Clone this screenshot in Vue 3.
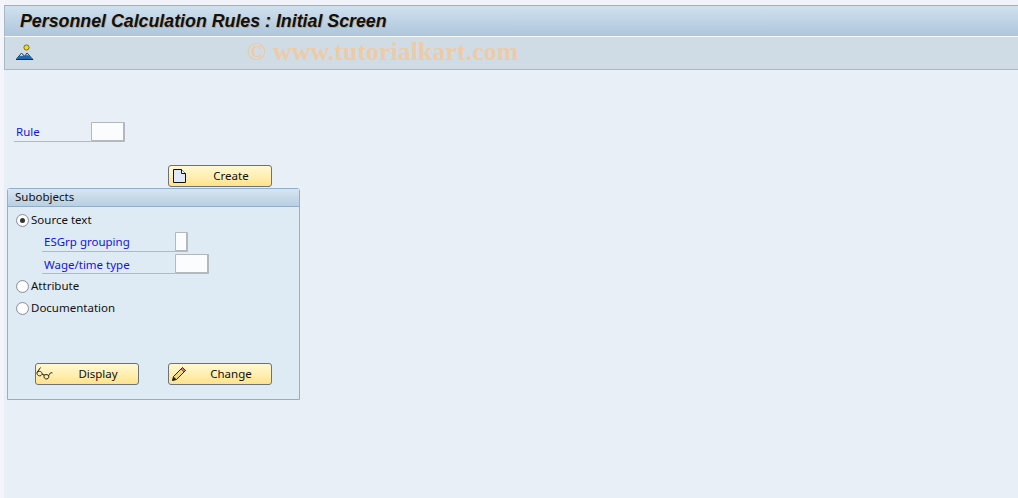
<script setup>
const radios = {
  attribute: 'Attribute',
  documentation: 'Documentation',
}
</script>

<template>
  <div class="page">
    <div class="edge"></div>
    <div class="main">
      <div class="topline"></div>
      <div class="titlebar"><h1>Personnel Calculation Rules : Initial Screen</h1></div>
      <div class="toolbar">
        <svg class="tool-icon" width="18" height="18" viewBox="0 0 18 18">
          <circle cx="10.5" cy="3.5" r="2.6" fill="#f8dc10" stroke="#6b6320" stroke-width="0.9" />
          <path d="M0.5 15.5 5.5 9.5 8.5 12.5 11 9.5 16.5 15.5Z" fill="#1b69b4" />
          <path d="M5.5 9.5 3.6 11.8 5.4 11.4 7.2 12.2ZM11 9.5 9.4 11.4 11 11 12.8 11.6Z" fill="#fff" />
          <path d="M0 15.5 5.5 9 8.5 12.3 11 9 17 15.5" fill="none" stroke="#10304f" stroke-width="0.9" />
          <path d="M0 15.5H17" stroke="#10304f" stroke-width="1" />
        </svg>
      </div>
      <div class="watermark">© www.tutorialkart.com</div>
      <div class="content">
        <div class="rule-row">
          <label class="field-label rule-label">Rule</label>
          <span class="input w34"></span>
        </div>
        <div class="create-row">
          <button class="btn">
            <svg class="btn-icon" width="16" height="16" viewBox="0 0 16 16">
              <path d="M2.5 1.5H10.5L14.5 5.5V14.5H2.5Z" fill="#dfeaf6" stroke="#111" />
              <path d="M10.5 1.5V5.5H14.5" fill="#fff" stroke="#111" />
            </svg>
            <span>Create</span>
          </button>
        </div>
        <section class="group">
          <div class="group-head">Subobjects</div>
          <div class="group-body">
            <div class="radio-row first">
              <span class="radio on"></span><span class="radio-text">Source text</span>
            </div>
            <div class="sub-row tall">
              <label class="field-label sub-label first-label">ESGrp grouping</label>
              <span class="input w13"></span>
            </div>
            <div class="sub-row">
              <label class="field-label sub-label">Wage/time type</label>
              <span class="input w34"></span>
            </div>
            <div class="radio-row attr">
              <span class="radio"></span><span class="radio-text">{{ radios.attribute }}</span>
            </div>
            <div class="radio-row doc">
              <span class="radio"></span><span class="radio-text">{{ radios.documentation }}</span>
            </div>
            <div class="actions">
              <button class="btn">
                <svg class="btn-icon glasses" width="18" height="16" viewBox="0 0 18 16">
                  <path d="M4.5 1.5 1 6.5C0.5 9 3 10.5 5 9.5 6.5 8.5 6.5 6.5 4.5 5.5 3.5 5 2 5.5 1 6.5M6 8 8 9M8 9C7.5 11.5 9 13.5 11 13 13 12.5 13.5 10 12 9 11 8.5 9 8.5 8 9M13 9.5C13.5 7.5 14.5 6 16.5 7" fill="none" stroke="#222" stroke-width="1" />
                </svg>
                <span>Display</span>
              </button>
              <button class="btn">
                <svg class="btn-icon" width="16" height="16" viewBox="0 0 16 16">
                  <path d="M1.5 14.5 2.5 10.5 11.5 1.5 14.5 4.5 5.5 13.5Z" fill="#f4d77c" stroke="#222" />
                  <path d="M11.5 1.5 14.5 4.5 13 6 10 3Z" fill="#d0746a" stroke="#222" stroke-width="0.6" />
                  <path d="M1.5 14.5 2.5 10.5 5.5 13.5Z" fill="#222" />
                </svg>
                <span>Change</span>
              </button>
            </div>
          </div>
        </section>
      </div>
    </div>
  </div>
</template>

<style>
html, body { margin: 0; background: #e8eff6; }
</style>

<style scoped>
.page {
  display: flex;
  width: 1018px;
  height: 498px;
  overflow: hidden;
  background: #e8eff6;
  font-family: "Noto Sans", sans-serif;
  font-size: 11.5px;
  color: #111;
  position: relative;
}
.edge { width: 4px; background: #f3f5fa; flex: none; }
.main { flex: 1; min-width: 0; }
.topline {
  height: 5px;
  background: #f1f3f9;
  border-bottom: 1px solid #a5afc2;
}
.titlebar {
  height: 30px;
  background: linear-gradient(#d0e1ef, #aec5db);
  border-bottom: 1px solid #f4f8fb;
  border-left: 1px solid #a9b8c6;
  display: flex;
  align-items: center;
  padding-left: 15px;
}
h1 {
  margin: 0;
  font: italic bold 17.8px "Liberation Sans", sans-serif;
  color: #111;
  text-shadow: 1px 1px 0 rgba(190, 120, 20, .45);
}
.toolbar {
  height: 32px;
  background: #cfdce6;
  border-bottom: 1px solid #a9b8c6;
  border-left: 1px solid #a9b8c6;
  display: flex;
  align-items: center;
  padding-left: 11px;
}
.tool-icon { display: block; }
.watermark {
  position: absolute;
  left: 247px;
  top: 37px;
  font: bold 26px "Liberation Serif", serif;
  color: #edcba6;
  white-space: nowrap;
}
.content { padding-top: 52px; }
.field-label { color: #1414e0; display: block; }
.rule-row {
  display: flex;
  align-items: flex-end;
  margin-left: 10px;
}
.rule-label {
  width: 77px;
  padding-left: 2px;
  box-sizing: border-box;
  height: 20px;
  line-height: 19px;
  border-bottom: 1px solid #b5b9bd;
}
.input {
  display: block;
  box-sizing: border-box;
  height: 20px;
  background: #fbfcfe;
  border: 1px solid #b4b8bc;
  border-bottom-width: 2px;
  border-right-width: 2px;
  border-radius: 1px;
}
.w34 { width: 34px; }
.w13 { width: 13px; }
.create-row { margin: 23px 0 0 164px; height: 23px; }
.btn {
  display: flex;
  align-items: center;
  width: 104px;
  height: 22px;
  padding: 0 0 2px;
  box-sizing: border-box;
  position: relative;
  border: 1px solid #6d7278;
  border-radius: 3px;
  background: linear-gradient(#fff8d2, #ffeeb0 55%, #ffe28a);
  font: inherit;
  color: #111;
}
.btn > span { flex: 1; text-align: center; padding-left: 22px; }
.btn-icon { position: absolute; left: 2px; top: 2px; }
.glasses { left: 0; }
.group {
  width: 293px;
  margin-left: 3px;
  box-sizing: border-box;
  border: 1px solid #93aec8;
  border-radius: 3px 3px 0 0;
  background: #deeaf4;
  height: 212px;
}
.group-head {
  height: 17px;
  line-height: 15px;
  padding-left: 7px;
  background: linear-gradient(#d7e5f1, #b9cfe2);
  border-bottom: 1px solid #93aec8;
}
.group-body { padding: 0 0 0 8px; }
.radio-row { display: flex; align-items: center; height: 18px; }
.radio-row.first { margin-top: 4px; }
.radio-row.attr { margin-top: 3px; }
.radio-row.doc { margin-top: 4px; }
.radio-text { margin-top: -2px; }
.radio {
  width: 13px;
  height: 13px;
  border-radius: 50%;
  box-sizing: border-box;
  border: 1px solid #8c9198;
  background: radial-gradient(circle, #fff 50%, #e6e6e6);
  margin-right: 2px;
  position: relative;
  flex: none;
}
.radio.on::after {
  content: "";
  position: absolute;
  left: 3px;
  top: 3px;
  width: 5px;
  height: 5px;
  border-radius: 50%;
  background: #333;
}
.sub-row {
  display: flex;
  align-items: flex-end;
  margin-left: 26px;
  margin-top: 2px;
}
.sub-row.tall { margin-top: 3px; }
.sub-label {
  width: 133px;
  padding-left: 2px;
  box-sizing: border-box;
  height: 20px;
  line-height: 21px;
  border-bottom: 1px solid #b5b9bd;
}
.first-label { line-height: 19px; }
.actions {
  display: flex;
  gap: 29px;
  margin: 46px 0 0 19px;
}
</style>
